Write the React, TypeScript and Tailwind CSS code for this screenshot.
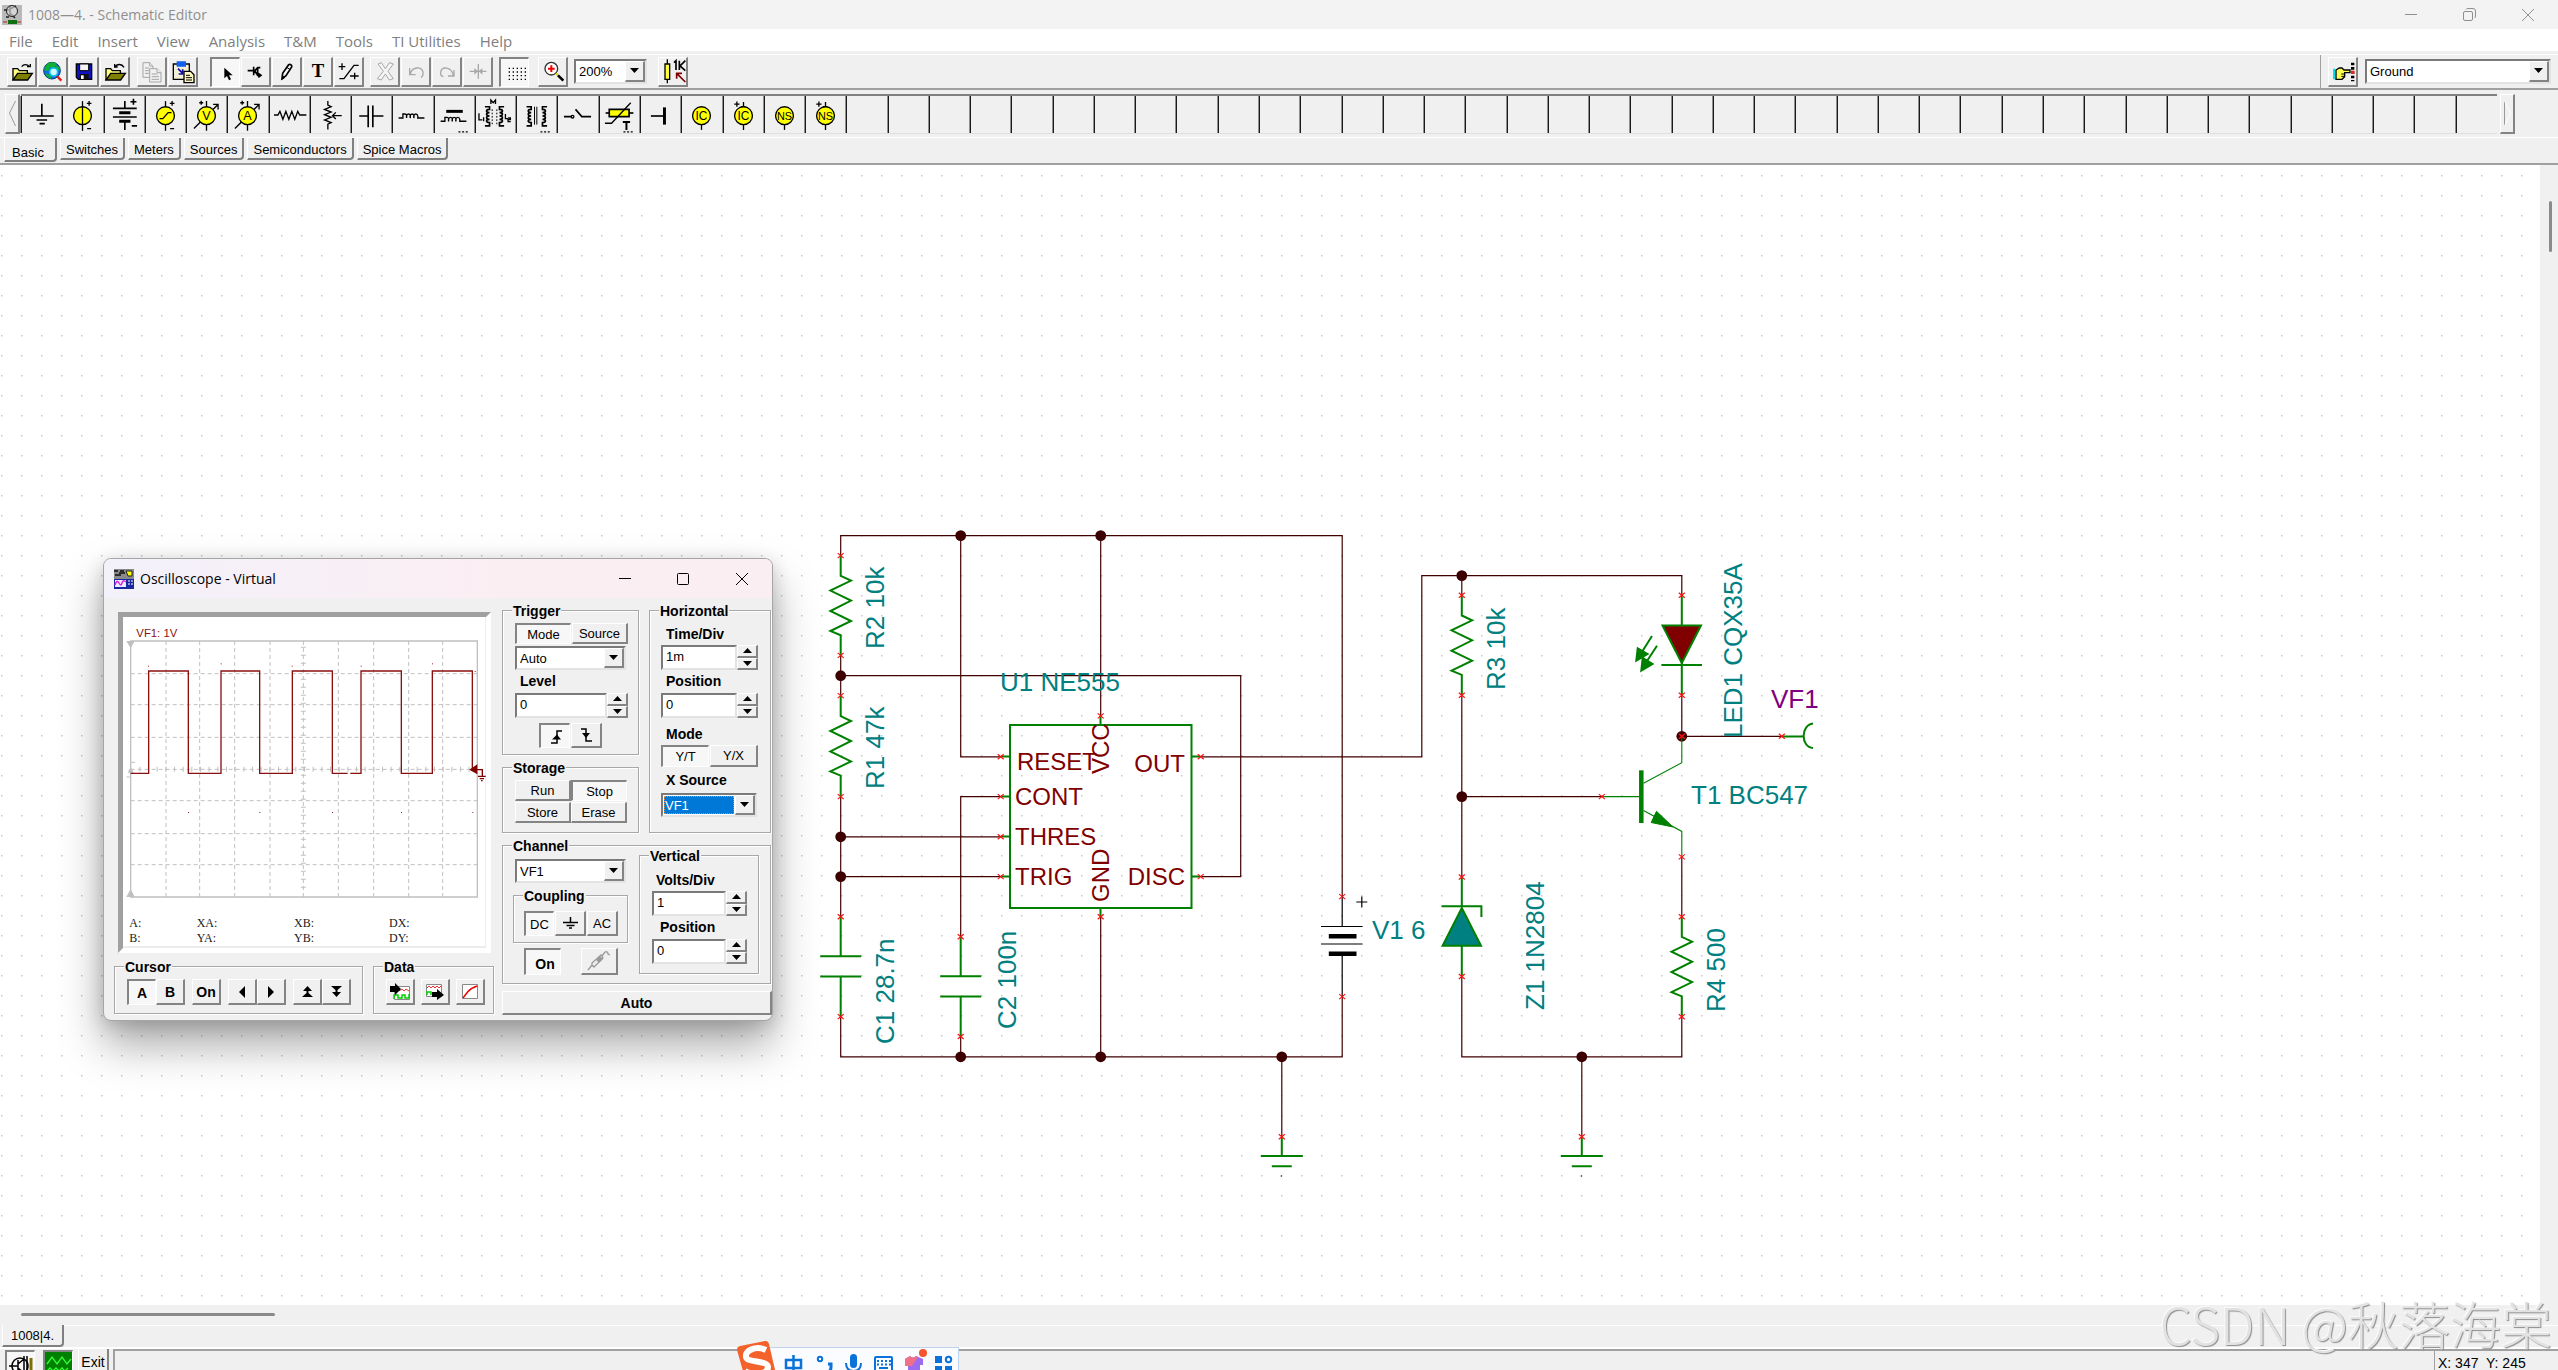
import type { ReactNode } from 'react';
import clsx from 'clsx';

const RAISED =
  'border-t border-l border-r-2 border-b-2 border-t-white border-l-white border-r-[#848484] border-b-[#848484] bg-[#f0f0f0]';
const PRESSED =
  'border-t-2 border-l-2 border-r border-b border-t-[#848484] border-l-[#848484] border-r-white border-b-white bg-[#f7f7f7]';
const SUNKEN =
  'border-t-2 border-l-2 border-r-2 border-b-2 border-t-[#7a7a7a] border-l-[#7a7a7a] border-r-[#e3e3e3] border-b-[#e3e3e3] bg-white';

interface BevelButtonProps {
  label: string;
  pressed?: boolean;
  className?: string;
  children: ReactNode;
}

function BevelButton({ label, pressed, className, children }: BevelButtonProps) {
  return (
    <button
      type="button"
      aria-label={label}
      aria-pressed={pressed}
      className={clsx('flex shrink-0 items-center justify-center leading-none', pressed ? PRESSED : RAISED, className)}
    >
      {children}
    </button>
  );
}

interface ComboProps {
  id: string;
  label: string;
  value: string;
  className?: string;
  selected?: boolean;
}

function Combo({ id, label, value, className, selected }: ComboProps) {
  return (
    <div className={clsx('relative flex', SUNKEN, className)}>
      <select
        id={id}
        aria-label={label}
        defaultValue={value}
        className={clsx(
          'min-w-0 flex-1 appearance-none text-[13px] leading-none outline-none',
          selected ? 'm-px mr-[21px] border border-dotted border-[#e08a3c] bg-[#0078d7] text-white' : 'bg-white pl-[3px] text-black'
        )}
      >
        <option>{value}</option>
      </select>
      <span className={clsx('pointer-events-none absolute inset-y-0 right-0 flex w-5 items-center justify-center', RAISED)}>
        <svg width="9" height="6" viewBox="0 0 9 6">
          <path d="M0 0h9L4.500 5z" />
        </svg>
      </span>
    </div>
  );
}

function Spin({ id, label, value, className }: ComboProps) {
  return (
    <div className={clsx('flex h-[25px]', className)}>
      <input
        id={id}
        aria-label={label}
        defaultValue={value}
        className={clsx('min-w-0 flex-1 pl-[3px] pb-0.5 text-[13px] leading-none outline-none', SUNKEN)}
      />
      <div className="flex w-[21px] flex-col">
        <BevelButton label={`${label} up`} className="flex-1">
          <svg width="9" height="5" viewBox="0 0 9 5">
            <path d="M0 5h9L4.500 0z" />
          </svg>
        </BevelButton>
        <BevelButton label={`${label} down`} className="flex-1">
          <svg width="9" height="5" viewBox="0 0 9 5">
            <path d="M0 0h9L4.500 5z" />
          </svg>
        </BevelButton>
      </div>
    </div>
  );
}

function Group({ title, className, children }: { title: string; className?: string; children: ReactNode }) {
  return (
    <fieldset className={clsx('relative min-w-0 border border-[#a8a8a8] shadow-[1px_1px_0_#fff,inset_1px_1px_0_#fff]', className)}>
      <legend className="absolute -top-2 left-[9px] bg-[#f0f0f0] px-px text-[14px] leading-4 font-bold">{title}</legend>
      {children}
    </fieldset>
  );
}

/* ---------- main toolbar icons, drawn on a 90x90 grid ---------- */

function ToolIcon({ children }: { children: ReactNode }) {
  return (
    <svg className="h-[30px] w-[30px] shrink-0" viewBox="0 0 90 90" fill="none" stroke="#000" strokeWidth="4">
      {children}
    </svg>
  );
}

const folder = (
  <>
    <path d="M18 72V38h14l5 6h24v8" fill="#ffff80" strokeWidth="4" />
    <path d="M18 72l14-20h44L62 72z" fill="#808000" strokeWidth="4" />
  </>
);

const openIcon = (
  <>
    {folder}
    <path d="M44 32c6-8 16-8 24 0M60 32h10V24" strokeWidth="4" />
  </>
);
const openBackIcon = (
  <>
    {folder}
    <path d="M44 24v9h9M45 32c8-9 20-9 27 2" strokeWidth="4" />
  </>
);
const globeIcon = (
  <>
    <circle cx="42" cy="44" r="25" fill="#1668e8" stroke="#003a80" strokeWidth="3" />
    <path d="M24 28c8-10 24-12 32-4l-8 12-12-2-6 12-12-4z" fill="#10b030" stroke="none" />
    <path d="M22 52l14 4 4 12c-8 0-16-6-18-16zM52 26l12 8 2 10-10-4z" fill="#10b030" stroke="none" />
    <circle cx="47" cy="48" r="12" fill="#d8f6ff" stroke="#00c8e0" strokeWidth="5" />
    <path d="M57 60l13 14" stroke="#e81818" strokeWidth="7" />
  </>
);
const saveIcon = (
  <>
    <path d="M22 24h46v46H28l-6-6z" fill="#1010c0" />
    <path d="M32 24h27v20H32z" fill="#f4f4f4" strokeWidth="3" />
    <path d="M32 54h27v16H32z" fill="#101010" stroke="none" />
    <path d="M36 58h8v11h-8z" fill="#fff" stroke="none" />
  </>
);
const copyIcon = (
  <g stroke="#a5a5a5" strokeWidth="3" fill="#f0f0f0">
    <path d="M18 20h20l10 10v34H18z" />
    <path d="M38 20v10h10M24 36h12M24 44h12M24 52h12" />
    <path d="M38 38h22l12 12v28H38z" />
    <path d="M60 38v12h12M44 54h18M44 62h22M44 70h22" />
  </g>
);
const pasteIcon = (
  <>
    <path d="M16 24h48v46H16z" fill="#f4f0d8" />
    <path d="M28 18h24v12H28z" fill="#1060f0" stroke="#1060f0" />
    <path d="M30 38l14 14M44 40v14H32" stroke="#1010a0" strokeWidth="5" />
    <path d="M48 46h20l10 10v24H48z" fill="#fff8c0" />
    <path d="M54 58h12M54 65h18M54 72h18" strokeWidth="3" />
  </>
);
const cursorIcon = <path d="M40 32v32l8-7 6 13 6-3-6-12h11z" fill="#000" stroke="none" />;
const wireIcon = <path d="M20 44h18M38 32v26M38 44h4l8-9h8M42 46l8 12h8M50 35v23M52 52l8 6-8 6" strokeWidth="5" />;
const penIcon = (
  <>
    <path d="M30 68l2-16 18-26c4-3 11 1 9 7L42 59z" fill="#f8f8f8" strokeWidth="5" />
    <path d="M44 34l11 7M30 70l3-9 5 4z" strokeWidth="3" />
  </>
);
const textIcon = (
  <text x="45" y="64" textAnchor="middle" fill="#000" stroke="none" className="font-['Liberation_Serif',serif] text-[56px] font-bold">
    T
  </text>
);
const signIcon = <path d="M14 32h20M24 22v20M16 68h14L60 28h14M48 60h26M62 50v20" strokeWidth="4" />;
const deleteIcon = (
  <path
    d="M24 24l10-4 12 18 12-18 12 4-16 22 16 22-12 4-12-18-12 18-12-4 18-22z"
    stroke="#a8a8a8"
    strokeWidth="3"
    fill="#f4f4f4"
  />
);
const undoIcon = <path d="M26 36v20h18M28 54c4-20 32-26 38-6 1 8-2 14-6 16" stroke="#a8a8a8" strokeWidth="4" />;
const redoIcon = <path d="M66 42v18H48M64 58C58 32 30 30 26 48c-1 8 3 13 8 14" stroke="#a8a8a8" strokeWidth="4" />;
const mirrorIcon = (
  <>
    <path d="M20 46h50M46 24v44" stroke="#a8a8a8" strokeWidth="4" />
    <path d="M34 36l11 10-11 10zM58 36L47 46l11 10z" fill="#a8a8a8" stroke="none" />
  </>
);
const gridIcon = <path d="M26 34h54M26 45h54M26 56h54M26 67h54" strokeWidth="4" strokeDasharray="4 8" />;
const zoomIcon = (
  <>
    <circle cx="40" cy="38" r="19" fill="#fff" stroke="#303030" strokeWidth="4" />
    <path d="M30 38h20M40 28v20" stroke="#f00000" strokeWidth="6" />
    <path d="M54 52l6 6" stroke="#e0d000" strokeWidth="6" />
    <path d="M60 58l16 16" strokeWidth="8" />
  </>
);
const valueIcon = (
  <>
    <path d="M28 10v72" strokeWidth="4" />
    <path d="M21 24h14v46H21z" fill="#ffff40" strokeWidth="4" />
    <path d="M48 20l6-6v28M64 14v28M82 14L66 30l16 14" strokeWidth="5" />
    <path d="M54 52h18M56 50v18M56 52l26 26" stroke="#800000" strokeWidth="5" />
  </>
);
const handIcon = (
  <>
    <path d="M18 38v32" stroke="#00e0f0" strokeWidth="6" />
    <path d="M24 42l10-6h8l6 6h18v8H50v12l-8 8H24z" fill="#ffff50" strokeWidth="4" />
    <path d="M40 54h10M40 61h8" strokeWidth="3" />
    <path d="M74 20v56" strokeWidth="10" strokeDasharray="8 5" />
    <path d="M74 44v10" stroke="#f02020" strokeWidth="10" />
  </>
);

interface Tool {
  label: string;
  icon: ReactNode;
  pressed?: boolean;
}

const FILE_TOOLS: Tool[] = [
  { label: 'Open', icon: openIcon },
  { label: 'Open from the Web', icon: globeIcon },
  { label: 'Save', icon: saveIcon },
  { label: 'Close', icon: openBackIcon },
];
const CLIP_TOOLS: Tool[] = [
  { label: 'Copy', icon: copyIcon },
  { label: 'Paste', icon: pasteIcon },
];
const DRAW_TOOLS: Tool[] = [
  { label: 'Select', icon: cursorIcon, pressed: true },
  { label: 'Last component', icon: wireIcon },
  { label: 'Wire', icon: penIcon },
  { label: 'Text', icon: textIcon },
  { label: 'Hide/Reconnect', icon: signIcon },
];
const EDIT_TOOLS: Tool[] = [
  { label: 'Delete', icon: deleteIcon },
  { label: 'Rotate left', icon: undoIcon },
  { label: 'Rotate right', icon: redoIcon },
  { label: 'Mirror', icon: mirrorIcon },
];

function ToolGroup({ tools }: { tools: Tool[] }) {
  return (
    <div className="flex gap-px">
      {tools.map((tool) => (
        <BevelButton key={tool.label} label={tool.label} pressed={tool.pressed} className="h-[30px] w-[30px]">
          <ToolIcon>{tool.icon}</ToolIcon>
        </BevelButton>
      ))}
    </div>
  );
}

/* ---------- component palette, drawn on a 124x114 grid ---------- */

const disc = <circle cx="62" cy="59" r="27" fill="#ffff00" />;
const plusMinus = (
  <>
    <path d="M75 22h14M82 15v14M76 98h12" />
  </>
);
const coilLeft = 'M38 32h14v8c-12 0-12 10 0 10-12 0-12 10 0 10-12 0-12 10 0 10-12 0-12 10 0 10v10H38';
const coilRight = 'M94 32H80v8c12 0 12 10 0 10 12 0 12 10 0 10 12 0 12 10 0 10 12 0 12 10 0 10v10h14';

function discText(text: string, size: string) {
  return (
    <text x="62" y="72" textAnchor="middle" fill="#000" stroke="none" className={clsx("font-['Liberation_Sans',sans-serif]", size)}>
      {text}
    </text>
  );
}

const meter = (text: string) => (
  <>
    <path d="M62 15v90M24 98l72-72M82 25h15v15" />
    <circle cx="62" cy="59" r="27" fill="#ffff00" />
    {discText(text, 'text-[38px]')}
    <path d="M40 20h12M46 14v12" />
  </>
);

const PALETTE: { label: string; icon: ReactNode }[] = [
  { label: 'Ground', icon: <path d="M63 23v37M27 60h72M47 72h32M56 83h16" strokeWidth="5" /> },
  { label: 'Current source', icon: <>{disc}<path d="M62 15v90" />{plusMinus}</> },
  {
    label: 'Battery',
    icon: (
      <>
        <path d="M63 15v22M27 37h72M27 63h72M63 76v26M80 17h18M89 8v18M84 90h16" strokeWidth="5" />
        <path d="M46 50h34M46 76h34" strokeWidth="9" />
      </>
    ),
  },
  { label: 'Generator', icon: <><path d="M62 15v90" />{disc}<path d="M44 68h10l16-18h10" />{plusMinus}</> },
  { label: 'Voltage generator', icon: meter('V') },
  { label: 'Current generator', icon: meter('A') },
  { label: 'Resistor', icon: <path d="M15 57h12l6-11 9 24 9-24 9 24 9-24 9 24 9-24 6 11h20" /> },
  { label: 'Potentiometer', icon: <path d="M54 15v12l10 5-20 8 20 8-20 8 20 8-20 8 20 8-10 5v16M96 59H68M78 49L68 59l10 10" /> },
  { label: 'Capacitor', icon: <path d="M25 60h27M52 28v66M66 28v66M66 60h32" strokeWidth="5" /> },
  { label: 'Inductor', icon: <path d="M20 66h13V54h7c6 0 4 12 4 12s-2-12 6-12 5 12 5 12-2-12 6-12 5 12 5 12-2-12 6-12 6 12 6 12h20" /> },
  {
    label: 'Coil with core',
    icon: (
      <>
        <path d="M37 46h50" strokeWidth="9" />
        <path d="M20 76h13V64h7c6 0 4 12 4 12s-2-12 6-12 5 12 5 12-2-12 6-12 5 12 5 12-2-12 6-12 6 12 6 12h20" />
        <path d="M74 108h30" strokeDasharray="6 5" />
      </>
    ),
  },
  {
    label: 'Coupled inductors',
    icon: (
      <>
        <path d={coilLeft} transform="translate(-8 0)" strokeWidth="5" />
        <path d={coilRight} transform="translate(-6 0)" strokeWidth="5" />
        <path d="M12 52v20h10M26 64v12M92 54v14h8M100 66h7v5h-7v6h8M48 24V12l7 8 7-8v12" />
        <path d="M52 40v46M66 40v46" strokeWidth="3" strokeDasharray="5 5" />
      </>
    ),
  },
  {
    label: 'Transformer',
    icon: (
      <>
        <path d={coilLeft} transform="translate(-6 0)" strokeWidth="5" />
        <path d={coilRight} strokeWidth="5" />
        <path d="M56 32v54M63 32v54" strokeWidth="3" />
        <path d="M74 108h30" strokeDasharray="6 5" />
      </>
    ),
  },
  { label: 'Switch', icon: <><path d="M21 62h22M56 40l19 22h28" strokeWidth="5" /><circle cx="47" cy="62" r="4" /></> },
  {
    label: 'Thermistor',
    icon: (
      <>
        <path d="M20 51h84" strokeWidth="5" />
        <path d="M31 40h60v22H31z" fill="#ffff00" strokeWidth="5" />
        <path d="M96 20L38 82H18" />
        <path d="M72 78h22M83 78v24" strokeWidth="6" />
        <path d="M74 108h30" strokeDasharray="6 5" />
      </>
    ),
  },
  { label: 'Open end', icon: <><path d="M33 60h40" strokeWidth="5" /><path d="M74 34v52" strokeWidth="9" /></> },
  { label: 'Initial condition', icon: <><path d="M62 84v18" />{disc}{discText('IC', 'text-[36px]')}</> },
  { label: 'Initial condition 2', icon: <><path d="M62 84v18M62 18v16M34 24h16M42 16v16M54 32h14" />{disc}{discText('IC', 'text-[36px]')}</> },
  { label: 'Nodeset', icon: <><path d="M62 84v18" />{disc}{discText('NS', 'text-[33px]')}</> },
  { label: 'Nodeset 2', icon: <><path d="M62 84v18M62 18v16M34 24h16M42 16v16M54 32h14" />{disc}{discText('NS', 'text-[33px]')}</> },
];

const PALETTE_SLOTS = 60;

const MENU = ['File', 'Edit', 'Insert', 'View', 'Analysis', 'T&M', 'Tools', 'TI Utilities', 'Help'];
const TABS = ['Basic', 'Switches', 'Meters', 'Sources', 'Semiconductors', 'Spice Macros'];

function TitleBar() {
  return (
    <header className="flex h-[29px] shrink-0 items-center bg-[#f3f3f3] pl-0.5 text-[#8f8f8f]">
      <svg className="h-5 w-5" viewBox="0 0 20 20">
        <path d="M0 0h20v20H0z" fill="#b9b9b9" />
        <path d="M2 5h6M8 1v10M8 4l6-3M8 8l5 5M4 12h3" stroke="#222" strokeWidth="1.600" fill="none" />
        <circle cx="10" cy="6" r="5.500" fill="#e8e8e8" fillOpacity=".6" stroke="#222" />
        <path d="M6 15h9v4H6z" fill="#107010" />
        <path d="M1 17h4M15 17h4" stroke="#c02020" />
      </svg>
      <h1 className="ml-1.5 text-[14px] leading-5">1008—4. - Schematic Editor</h1>
      <div className="ml-auto flex">
        <button type="button" aria-label="Minimize" className="flex h-[29px] w-[58px] items-center justify-center">
          <svg width="12" height="12" stroke="#8f8f8f">
            <path d="M0 5.500h12" />
          </svg>
        </button>
        <button type="button" aria-label="Restore" className="flex h-[29px] w-[58px] items-center justify-center">
          <svg width="13" height="13" fill="none" stroke="#8f8f8f">
            <rect x=".5" y="3.500" width="9" height="9" rx="1.500" />
            <path d="M3 1.500q.5-1 2-1h5q2.500 0 2.500 2.500v5q0 1.500-1 2" />
          </svg>
        </button>
        <button type="button" aria-label="Close" className="flex h-[29px] w-[60px] items-center justify-center">
          <svg width="12" height="12" stroke="#8f8f8f">
            <path d="M0 0l12 12M12 0L0 12" />
          </svg>
        </button>
      </div>
    </header>
  );
}

function Toolbar() {
  return (
    <div className="flex h-9 shrink-0 items-center border-t border-b-2 border-t-white border-b-[#a0a0a0] pl-[7px]">
      <ToolGroup tools={FILE_TOOLS} />
      <div className="ml-[7px] flex">
        <ToolGroup tools={CLIP_TOOLS} />
      </div>
      <div className="ml-3 flex">
        <ToolGroup tools={DRAW_TOOLS} />
      </div>
      <div className="ml-1.5 flex">
        <ToolGroup tools={EDIT_TOOLS} />
      </div>
      <div className="ml-1.5 flex">
        <ToolGroup tools={[{ label: 'Grid', icon: gridIcon, pressed: true }]} />
      </div>
      <div className="ml-[9px] flex">
        <ToolGroup tools={[{ label: 'Zoom', icon: zoomIcon }]} />
      </div>
      <Combo id="zoom" label="Zoom level" value="200%" className="ml-[6px] h-[25px] w-[73px]" />
      <div className="ml-[11px] flex">
        <ToolGroup tools={[{ label: 'Component value', icon: valueIcon }]} />
      </div>
      <div className="ml-auto flex h-full items-center border-l border-[#a0a0a0] pr-[7px] pl-[7px]">
        <ToolGroup tools={[{ label: 'Find component', icon: handIcon }]} />
        <Combo id="component" label="Component" value="Ground" className="ml-[7px] h-[25px] w-[186px]" />
      </div>
    </div>
  );
}

function Palette() {
  return (
    <div className="flex h-[48px] shrink-0 items-start border-b border-white pt-1 pr-[43px] pl-[5px]">
      <button type="button" aria-label="Scroll left" className={clsx('h-[40px] w-[15px]', RAISED)}>
        <svg width="12" height="37" fill="none" stroke="#9a9a9a">
          <path d="M9.500 6L3.500 18l6 13" />
        </svg>
      </button>
      <div className="ml-px flex h-[40px] flex-1 border-t-2 border-b border-t-[#808080] border-b-[#e0e0e0]">
        {Array.from({ length: PALETTE_SLOTS }, (_, i) => {
          const part = PALETTE[i];
          return (
            <button
              key={i}
              type="button"
              aria-label={part ? part.label : `Empty slot ${i + 1}`}
              className="min-w-0 flex-1 border-l border-[#1a1a1a] shadow-[-1px_0_0_#8f8f8f]"
            >
              {part && (
                <svg className="-ml-px h-[38px] w-[41px]" viewBox="0 0 124 114" fill="none" stroke="#000" strokeWidth="4">
                  {part.icon}
                </svg>
              )}
            </button>
          );
        })}
      </div>
      <button type="button" aria-label="Scroll right" className={clsx('ml-[3px] h-[40px] w-[15px]', RAISED)}>
        <svg width="12" height="37" fill="none">
          <path d="M3.500 6v25" stroke="#9a9a9a" />
          <path d="M3.500 6l6 12-6 13" stroke="#fff" />
        </svg>
      </button>
    </div>
  );
}

function Tabs() {
  return (
    <nav className="flex h-[27px] shrink-0 items-start gap-[3px] border-b-2 border-[#a0a0a0] pl-1 text-[13px]">
      {TABS.map((tab, i) => (
        <button
          key={tab}
          type="button"
          className={clsx(
            'rounded-br-sm border-r-2 border-b-2 border-l border-r-[#808080] border-b-[#808080] border-l-white pt-0.5 leading-none',
            i === 0 ? 'h-6 w-[53px] pt-1.5 pr-1' : 'h-[22px] px-[5px]'
          )}
        >
          {tab}
        </button>
      ))}
    </nav>
  );
}

/* ---------- schematic ---------- */

const WIRES = [
  'M840.700 555.600V535.600H1342.200V896.600',
  'M960.700 535.600V756.800H1000.700',
  'M1100.700 535.600V715.900',
  'M840.700 655.400V695.600',
  'M840.700 675.700H1240.700V876.600H1200.700',
  'M840.700 796.600V916.800',
  'M840.700 836.800H1000.700',
  'M840.700 876.600H1000.700',
  'M1000.700 796.600H960.700V936.700',
  'M840.700 1016.600V1056.800H1342.200V996.600',
  'M960.700 1036.500V1056.800',
  'M1100.700 916.800V1056.800',
  'M1281.800 1056.800V1136.800',
  'M1200.700 756.800H1421.800V575.600H1681.800V595.300',
  'M1461.800 575.600V595.300',
  'M1461.800 695.300V877',
  'M1461.800 796.600H1601.800',
  'M1461.800 976.500V1056.800H1681.800V1016.700',
  'M1581.800 1056.800V1136.800',
  'M1681.800 695.300V736.300H1781.800',
  'M1681.800 856.900V916.700',
];

const NODES = [
  [960.7, 535.6],
  [1100.7, 535.6],
  [840.7, 675.7],
  [840.7, 836.8],
  [840.7, 876.6],
  [960.7, 1056.8],
  [1100.7, 1056.8],
  [1281.8, 1056.8],
  [1461.8, 575.6],
  [1461.8, 796.6],
  [1681.8, 736.3],
  [1581.8, 1056.8],
];

const PINS = [
  [840.7, 555.6],
  [840.7, 655.4],
  [840.7, 695.6],
  [840.7, 796.6],
  [840.7, 916.8],
  [840.7, 1016.6],
  [960.7, 936.7],
  [960.7, 1036.5],
  [1000.7, 756.8],
  [1000.7, 796.6],
  [1000.7, 836.8],
  [1000.7, 876.6],
  [1200.7, 756.8],
  [1200.7, 876.6],
  [1100.7, 715.9],
  [1100.7, 916.8],
  [1342.2, 896.6],
  [1342.2, 996.6],
  [1461.8, 595.3],
  [1461.8, 695.3],
  [1461.8, 877],
  [1461.8, 976.5],
  [1601.8, 796.6],
  [1681.8, 595.3],
  [1681.8, 695.3],
  [1681.8, 736.3],
  [1781.8, 736.3],
  [1681.8, 856.9],
  [1681.8, 916.7],
  [1681.8, 1016.7],
  [1281.8, 1136.8],
  [1581.8, 1136.8],
];

const RESISTORS = [
  [840.7, 555.6],
  [840.7, 696],
  [1461.8, 595.3],
  [1681.8, 916.7],
];

const CAPACITORS = [
  [840.7, 916.8],
  [960.7, 936.7],
];

const GROUNDS = [1281.8, 1581.8];

const PART_LABELS = [
  { text: 'U1 NE555', x: 1000, y: 691 },
  { text: 'V1 6', x: 1372, y: 939 },
  { text: 'T1 BC547', x: 1691, y: 804 },
];

const UPRIGHT_LABELS = [
  { text: 'R2 10k', x: 884, y: 649 },
  { text: 'R1 47k', x: 884, y: 789 },
  { text: 'C1 28.7n', x: 894, y: 1044 },
  { text: 'C2 100n', x: 1016, y: 1029 },
  { text: 'R3 10k', x: 1505, y: 690 },
  { text: 'LED1 CQX35A', x: 1742, y: 738 },
  { text: 'Z1 1N2804', x: 1544, y: 1010 },
  { text: 'R4 500', x: 1725, y: 1012 },
];

function Schematic() {
  return (
    <svg className="h-full w-full font-['Liberation_Sans',Arial,sans-serif]" role="img" aria-label="NE555 schematic">
      <defs>
        <pattern id="dots" width="20" height="20" patternUnits="userSpaceOnUse">
          <rect x="1" y="10" width="1.500" height="1.500" fill="#c8c8c8" />
        </pattern>
      </defs>
      <rect width="100%" height="100%" fill="url(#dots)" />
      <g transform="translate(0 -165)">
        <g stroke="#400000" strokeWidth="1.200" fill="none">
          {WIRES.map((d) => (
            <path key={d} d={d} />
          ))}
        </g>
        {NODES.map(([x, y]) => (
          <circle key={`${x}-${y}`} cx={x} cy={y} r="5.400" fill="#3c0000" />
        ))}

        <g stroke="#008000" strokeWidth="2" fill="none">
          {RESISTORS.map(([x, y]) => (
            <path key={`${x}-${y}`} transform={`translate(${x} ${y})`} d="M0 0V20.200L10.300 25L-10.300 35L10.300 45L-10.300 55.400L10.300 65.400L-10.300 75.400L0 79.600V100" />
          ))}
          {CAPACITORS.map(([x, y]) => (
            <path key={`${x}-${y}`} transform={`translate(${x} ${y})`} d="M0 0V39.500M-20.500 39.500H20.500M-20.500 59.700H20.500M0 59.700V100" />
          ))}
          {GROUNDS.map((x) => (
            <path key={x} d={`M${x} 1137V1156M${x - 21} 1156H${x + 21}M${x - 10} 1166.300H${x + 10}M${x - 1} 1176h1`} />
          ))}
          <rect x="1010" y="725" width="181.500" height="183" />
          <path d="M1001 756.400h9M1001 796.400h9M1001 836.600h9M1001 876.400h9M1191 756.600h9M1191 876.600h9M1100.500 716v9M1100.500 908v9" />

          {/* LED1 */}
          <path d="M1681.800 595V665M1681.800 665V695M1661.400 665H1702" />
          <path d="M1662.500 625.500H1701L1681.800 663z" fill="#800000" />
          <path d="M1652 636L1640 655M1657 645.700L1645 664" />
          <path d="M1636 661L1637.500 648L1648 654zM1641 671L1642.500 657.500L1653 664z" fill="#008000" strokeWidth="1.500" />

          {/* T1 */}
          <path d="M1681.800 737V762.700L1643.500 783.200M1601.800 796.600H1639M1643.500 810.400L1681.800 831.400V857" strokeWidth="1.100" />
          <path d="M1641.300 770.300V823" strokeWidth="4.500" />
          <path d="M1656.500 811.300L1673 827L1651.200 822.500z" fill="#008000" strokeWidth="1" />

          {/* VF1 probe */}
          <path d="M1782 736.500H1804M1813 723.500C1800.500 725 1800.500 747 1813 748" />

          {/* Z1 */}
          <path d="M1461.800 877V906M1441.500 906.200H1481.400V917M1461.800 946V976.500" />
          <path d="M1461.800 908L1481 945.700H1442.600z" fill="#008080" />
        </g>

        {/* V1 */}
        <g stroke="#000" fill="none">
          <path d="M1342.200 897V926.500M1342.200 955V996M1321 926.500H1362.600M1321 944H1362.600M1356.300 902H1367.300M1361.800 896.500V907.500" strokeWidth="1.200" />
          <path d="M1328.800 936.300H1356.500M1328.800 953.800H1356.500" strokeWidth="4.500" />
        </g>

        <g stroke="#ff1010" strokeWidth="1.200">
          {PINS.map(([x, y]) => (
            <path key={`${x}-${y}`} d={`M${x - 3} ${y - 2.5}L${x + 3} ${y + 2.5}M${x + 3} ${y - 2.5}L${x - 3} ${y + 2.5}`} />
          ))}
        </g>

        <g fill="#800000" className="text-[24px]">
          <text x="1017" y="770">RESET</text>
          <text x="1015" y="805">CONT</text>
          <text x="1015" y="845">THRES</text>
          <text x="1015" y="885">TRIG</text>
          <text x="1185" y="772" textAnchor="end">OUT</text>
          <text x="1185" y="885" textAnchor="end">DISC</text>
          <text transform="translate(1109 774) rotate(-90)">VCC</text>
          <text transform="translate(1109 902) rotate(-90)">GND</text>
        </g>
        <g fill="#008080" className="text-[26px]">
          {PART_LABELS.map((l) => (
            <text key={l.text} x={l.x} y={l.y}>
              {l.text}
            </text>
          ))}
          {UPRIGHT_LABELS.map((l) => (
            <text key={l.text} transform={`translate(${l.x} ${l.y}) rotate(-90)`}>
              {l.text}
            </text>
          ))}
        </g>
        <text x="1771" y="708" fill="#800080" className="text-[26px]">
          VF1
        </text>
      </g>
    </svg>
  );
}

/* ---------- oscilloscope ---------- */

const V_LINES = [228, 329, 434, 540, 640, 745, 851, 956, 1058];
const H_LINES = [371, 464, 562, 658, 752, 851, 944];
const SPIKES = [
  [175, 348],
  [393, 341],
  [606, 348],
  [813, 348],
  [1027, 341],
  [1155, 364],
  [295, 787],
  [509, 787],
  [727, 787],
  [934, 787],
  [1148, 787],
];
const READOUTS = [
  { text: 'A:', x: 118, y: 1132 },
  { text: 'B:', x: 118, y: 1177 },
  { text: 'XA:', x: 320, y: 1132 },
  { text: 'YA:', x: 320, y: 1177 },
  { text: 'XB:', x: 612, y: 1132 },
  { text: 'YB:', x: 612, y: 1177 },
  { text: 'DX:', x: 897, y: 1132 },
  { text: 'DY:', x: 897, y: 1177 },
];

function ScopeScreen() {
  return (
    <div className="ml-1 h-[341px] w-[373px] border-5 border-t-[#a0a0a0] border-r-white border-b-white border-l-[#a0a0a0] bg-white">
      <svg className="h-full w-full" viewBox="99 201 1089 993" fill="none">
        <path d="M99 1191H1188M1188 201V1191" stroke="#e8e8e8" strokeWidth="4" />
        <g stroke="#c0c0c0" strokeWidth="3">
          <path d="M122 273H1162V1041H122z" strokeWidth="4" />
          {V_LINES.map((x) => (
            <path key={x} d={`M${x} 273V1041`} strokeDasharray="12 9" />
          ))}
          {H_LINES.map((y) => (
            <path key={y} d={`M122 ${y}H1162`} strokeDasharray="12 9" />
          ))}
          <path d="M640 290V1030" strokeWidth="15" strokeDasharray="3 21" />
          <path d="M148 658H1150" strokeWidth="15" strokeDasharray="3 23" />
          <path d="M122 637h13M110 681h13" />
        </g>
        <path d="M109 273h25l-12 22zM109 1041h25l-12-24zM113 668h18l-9-18z" fill="#c0c0c0" />
        <path
          d="M122 670H176V363H295V670H393V363H509V670H607V363H727V670H773M781 670H813V363H934V670H1027V363H1147V658"
          stroke="#8a1010"
          strokeWidth="4"
        />
        {SPIKES.map(([x, y]) => (
          <rect key={`${x}-${y}`} x={x - 1} y={y - 1} width="3" height="3" fill="#a02020" />
        ))}
        <path d="M1138 659l24-16v30z" fill="#800000" />
        <path d="M1160 659h17v20M1164 679h23M1169 686h13M1173 692h5" stroke="#800000" strokeWidth="4" />
        <text x="139" y="260" fill="#8a1010" className="font-['Liberation_Sans',sans-serif] text-[34px]">
          VF1: 1V
        </text>
        <g fill="#202020" className="font-['Liberation_Serif',serif] text-[36px]">
          {READOUTS.map((r) => (
            <text key={r.text} x={r.x} y={r.y}>
              {r.text}
            </text>
          ))}
        </g>
      </svg>
    </div>
  );
}

function Oscilloscope() {
  return (
    <section
      aria-label="Oscilloscope"
      className="absolute top-[393px] left-[103px] w-[670px] overflow-hidden rounded-lg border border-[#a6a6a6] bg-[#f0f0f0] shadow-[0_24px_44px_rgba(0,0,0,0.34),0_4px_18px_rgba(0,0,0,0.16)]"
    >
      <header className="flex h-[39px] items-center bg-linear-to-r from-[#f3f1fa] to-[#fbeef3] to-60% pl-[10px] font-['Open_Sans','Noto_Sans',sans-serif]">
        <svg className="h-5 w-5" viewBox="0 0 20 20">
          <path d="M0 0h20v10H0z" fill="#8a8a8a" />
          <path d="M0 2h4M6 2h4M1 6h6M5 4h6" stroke="#111" strokeWidth="1.500" />
          <path d="M12 2h6v5h-4z" fill="#ffff00" stroke="#222" />
          <path d="M0 10h20v10H0z" fill="#1828a0" />
          <path d="M1 11h11v7H1z" fill="#e8f0ff" />
          <path d="M1 16q2-6 4-2t3 0 4-1" stroke="#e020e0" strokeWidth="1.500" fill="none" />
          <path d="M14 12h2M17 12h2M14 15h2M17 15h2" stroke="#fff" />
        </svg>
        <h2 className="ml-1.5 text-[14px] leading-5">Oscilloscope - Virtual</h2>
        <div className="ml-auto flex">
          <button type="button" aria-label="Minimize oscilloscope" className="flex h-[39px] w-[58px] items-center justify-center">
            <svg width="12" height="12" stroke="#000">
              <path d="M0 5.500h12" />
            </svg>
          </button>
          <button type="button" aria-label="Maximize oscilloscope" className="flex h-[39px] w-[58px] items-center justify-center">
            <svg width="12" height="12" stroke="#000" fill="none">
              <rect x=".5" y=".5" width="11" height="11" rx="1" />
            </svg>
          </button>
          <button type="button" aria-label="Close oscilloscope" className="flex h-[39px] w-[60px] items-center justify-center">
            <svg width="12" height="12" stroke="#000">
              <path d="M0 0l12 12M12 0L0 12" />
            </svg>
          </button>
        </div>
      </header>

      <div className="flex gap-2 pt-3 pb-[5px] pl-[10px] text-[13px]">
        <div className="w-[380px] shrink-0 pt-0.5">
          <ScopeScreen />
          <div className="mt-[13px] flex gap-[10px]">
            <Group title="Cursor" className="flex h-12 w-[249px] items-center gap-[7px] pt-1 pl-3 text-[14px] font-bold">
              <div className="flex">
                <BevelButton label="Cursor A" pressed className="h-[26px] w-[29px]">A</BevelButton>
                <BevelButton label="Cursor B" className="h-[26px] w-[29px]">B</BevelButton>
              </div>
              <BevelButton label="Cursor on" className="h-[26px] w-[29px]">On</BevelButton>
              <div className="flex">
                <BevelButton label="Cursor left" className="h-[26px] w-[29px]">
                  <svg width="6" height="12"><path d="M6 0v12L0 6z" /></svg>
                </BevelButton>
                <BevelButton label="Cursor right" className="h-[26px] w-[29px]">
                  <svg width="6" height="12"><path d="M0 0v12l6-6z" /></svg>
                </BevelButton>
              </div>
              <div className="flex">
                <BevelButton label="Cursor up" className="h-[26px] w-[29px]">
                  <svg width="11" height="12"><path d="M5.500 0L10 5H6.500v2L11 11H0l4.500-4V5H1z" /></svg>
                </BevelButton>
                <BevelButton label="Cursor down" className="h-[26px] w-[29px]">
                  <svg width="11" height="12"><path d="M0 0h11L6.500 4v2H10L5.500 11 1 6h3.500V4z" /></svg>
                </BevelButton>
              </div>
            </Group>
            <Group title="Data" className="flex h-12 w-[121px] items-center gap-1.5 pt-1 pl-3">
              <BevelButton label="Import data" className="h-[26px] w-[29px]">
                <svg width="20" height="18" fill="none">
                  <path d="M4.500 3.500h15v13h-15z" fill="#fff" stroke="#888" />
                  <path d="M9 8l3-2 2 2 2-2 3 2" stroke="#f03030" />
                  <path d="M4 16v-4h4v3h4v-3h3v3h4v-4" stroke="#00d000" strokeWidth="1.500" />
                  <path d="M0 3h5V0l6 6-6 6V9H0z" fill="#000" />
                </svg>
              </BevelButton>
              <BevelButton label="Export data" className="h-[26px] w-[29px]">
                <svg width="20" height="18" fill="none">
                  <path d="M1.500 1.500h15v12h-15z" fill="#fff" stroke="#888" />
                  <path d="M2 5l2-2 2 2 2-2 2 2 2-2 2 2 2-2" stroke="#f03030" />
                  <path d="M2 12V9h4v3" stroke="#00d000" strokeWidth="1.500" />
                  <path d="M7 9h5V6l7 6-7 5v-3H7z" fill="#000" />
                </svg>
              </BevelButton>
              <BevelButton label="Fit curve" className="h-[26px] w-[29px]">
                <svg width="18" height="16" fill="none">
                  <path d="M1.500.5h15v14h-15z" fill="#fff" stroke="#888" />
                  <path d="M2 14L7 7.500Q10 4 16 2" stroke="#f00000" strokeWidth="1.500" />
                </svg>
              </BevelButton>
            </Group>
          </div>
        </div>

        <div className="w-[270px] shrink-0">
          <div className="flex items-start gap-[10px]">
            <div className="w-[137px] space-y-3">
              <Group title="Trigger" className="flex h-[145px] flex-col pt-3 pr-[10px] pl-3">
                <div className="flex gap-px">
                  <BevelButton label="Trigger mode" pressed className="h-[21px] w-14">Mode</BevelButton>
                  <BevelButton label="Trigger source" className="h-[21px] w-14">Source</BevelButton>
                </div>
                <Combo id="trigger-mode" label="Trigger mode value" value="Auto" className="mt-0.5 h-6 w-[111px]" />
                <label htmlFor="trigger-level" className="pl-[5px] text-[14px] leading-[23px] font-bold">
                  Level
                </label>
                <Spin id="trigger-level" label="Level" value="0" />
                <div className="mt-[5px] ml-6 flex gap-px">
                  <BevelButton label="Rising edge" pressed className="h-[25px] w-[31px]">
                    <svg className="mt-0.5 ml-0.5" width="13" height="14" fill="none" stroke="#000" strokeWidth="1.500">
                      <path d="M1 13h6V1h5" />
                      <path d="M2 9.500l5-5 4 5z" fill="#000" stroke="none" />
                    </svg>
                  </BevelButton>
                  <BevelButton label="Falling edge" className="h-[25px] w-[31px]">
                    <svg width="13" height="14" fill="none" stroke="#000" strokeWidth="1.500">
                      <path d="M1 1h5v12h6" />
                      <path d="M2 5h8l-4 5z" fill="#000" stroke="none" />
                    </svg>
                  </BevelButton>
                </div>
              </Group>
              <Group title="Storage" className="grid h-[66px] grid-cols-2 content-start gap-y-px pt-3 pr-[11px] pl-3">
                <BevelButton label="Run" className="h-[21px]">Run</BevelButton>
                <BevelButton label="Stop" pressed className="h-[21px]">Stop</BevelButton>
                <BevelButton label="Store" className="h-[21px]">Store</BevelButton>
                <BevelButton label="Erase" className="h-[21px]">Erase</BevelButton>
              </Group>
            </div>

            <Group title="Horizontal" className="flex h-[223px] w-[122px] flex-col pt-3 pr-3 pl-[11px]">
              <label htmlFor="time-div" className="pl-[5px] text-[14px] leading-[22px] font-bold">
                Time/Div
              </label>
              <Spin id="time-div" label="Time/Div" value="1m" />
              <label htmlFor="h-position" className="pl-[5px] text-[14px] leading-[23px] font-bold">
                Position
              </label>
              <Spin id="h-position" label="Horizontal position" value="0" />
              <span className="mt-[5px] pl-[5px] text-[14px] leading-[22px] font-bold">Mode</span>
              <div className="flex gap-px">
                <BevelButton label="Y/T" pressed className="h-[22px] w-12">Y/T</BevelButton>
                <BevelButton label="Y/X" className="h-[22px] w-12">Y/X</BevelButton>
              </div>
              <label htmlFor="x-source" className="pl-[5px] text-[14px] leading-[26px] font-bold">
                X Source
              </label>
              <Combo id="x-source" label="X Source" value="VF1" selected className="h-6 w-[96px]" />
            </Group>
          </div>

          <Group title="Channel" className="mt-3 flex h-[139px] w-[269px] gap-[11px] pt-[9px] pl-[10px]">
            <div className="w-[115px] pt-1">
              <Combo id="channel" label="Channel" value="VF1" className="ml-0.5 h-6 w-[111px]" />
              <Group title="Coupling" className="mt-3 flex h-12 w-[115px] gap-px pt-[15px] pl-[10px]">
                <BevelButton label="DC" pressed className="h-[25px] w-[30px]">DC</BevelButton>
                <BevelButton label="Ground coupling" className="h-[25px] w-[31px]">
                  <svg width="15" height="12" fill="none" stroke="#000" strokeWidth="1.500">
                    <path d="M7.500 0v5M0 5.500h15M3.500 8.500h8M6 11h3" />
                  </svg>
                </BevelButton>
                <BevelButton label="AC" className="h-[25px] w-[31px]">AC</BevelButton>
              </Group>
              <div className="mt-[5px] flex justify-between pr-[10px] pl-[11px]">
                <BevelButton label="Channel on" pressed className="h-[27px] w-[37px] pt-1 pl-1 text-[14px] font-bold">
                  On
                </BevelButton>
                <BevelButton label="Probe" className="h-[27px] w-[37px]">
                  <svg width="24" height="20" fill="none" stroke="#999" strokeWidth="1.300">
                    <path d="M1 19l4-5M5 14l2 2 9-9-2-3-9 8zM15 5l3-4q3-1 3 2l2 1" />
                    <path d="M10 9l3-3 2 2-3 3z" fill="#999" />
                  </svg>
                </BevelButton>
              </div>
            </div>
            <Group title="Vertical" className="flex h-[119px] w-[120px] flex-col pt-[13px] pr-[11px] pl-3">
              <label htmlFor="volts-div" className="pl-1 text-[14px] leading-[22px] font-bold">
                Volts/Div
              </label>
              <Spin id="volts-div" label="Volts/Div" value="1" />
              <label htmlFor="v-position" className="pl-2 text-[14px] leading-[23px] font-bold">
                Position
              </label>
              <Spin id="v-position" label="Vertical position" value="0" />
            </Group>
          </Group>
          <BevelButton label="Auto" className="mt-[7px] h-6 w-full text-[14px] font-bold">
            Auto
          </BevelButton>
        </div>
      </div>
    </section>
  );
}

/* ---------- bottom of the window ---------- */

function ImeBar() {
  return (
    <div className="absolute top-[-8px] left-[737px] flex h-10 items-start">
      <svg className="relative z-10" width="40" height="40" viewBox="0 0 40 40">
        <path d="M0 9Q-.5 6 3 5L28 0Q31-.5 32 3l7 30-30 8z" fill="#f4622c" />
        <path d="M29 9C18 4 8 10 9 16s22 3 22 10-14 9-23 4" fill="none" stroke="#fff" strokeWidth="6" />
      </svg>
      <div className="mt-1.5 -ml-6 flex h-9 w-[206px] items-start border border-[#bfd3ee] bg-[#fafcff] pt-[7px] pl-[30px] text-[#0a72d8]">
        <svg className="overflow-visible" width="174" height="24" viewBox="0 0 174 24" fill="none" stroke="#0a72d8" strokeWidth="2">
          <path d="M2 5h15v8H2zM9.500 0v22" strokeWidth="2.500" />
          <circle cx="36" cy="4" r="2.200" />
          <path d="M44 9h3v3q0 4-3 5" strokeWidth="3" />
          <rect x="66" y="-1" width="7" height="14" rx="3.500" fill="#0a72d8" stroke="none" />
          <path d="M62 8q0 8 7.500 8T77 8" />
          <rect x="91" y="2" width="17" height="14" rx="1" />
          <path d="M93 6h14M93 9.500h14" strokeDasharray="2 2" />
          <path d="M95 13h9" />
          <path d="M121 4l5-3q3 3 6 0l7 3v6h-3v12h-12V10h-3z" fill="#9b6bf0" stroke="none" />
          <path d="M121 4l5-3q3 3 6 0l2 1-6 9h-7z" fill="#f07088" stroke="none" />
          <circle cx="139" cy="-2" r="4" fill="#f4552c" stroke="none" />
          <path d="M151 1h7v7h-7zM151 11h7v9h-7zM161 11h7v9h-7z" fill="#0a72d8" stroke="none" />
          <circle cx="164.500" cy="4.500" r="2.700" />
        </svg>
      </div>
    </div>
  );
}

function StatusBar() {
  return (
    <footer className="relative flex h-[21px] shrink-0 items-start text-[14px]">
      <div className="flex h-6 gap-2 pt-px pl-[5px]">
        <button type="button" aria-label="Schematic view" className={clsx('h-[30px] w-[30px]', PRESSED)}>
          <svg width="27" height="27" viewBox="0 0 27 27" fill="none" stroke="#000" strokeWidth="1.500">
            <circle cx="13" cy="14" r="8" />
            <path d="M2 14h9M11 8v12M11 12l6-5M11 16l6 5M17 4v20M20 4v20" />
            <path d="M24 6v14" stroke="#807000" strokeWidth="3" />
          </svg>
        </button>
        <button type="button" aria-label="Oscilloscope view" className={clsx('h-[30px] w-[30px]', PRESSED)}>
          <svg width="27" height="27" viewBox="0 0 27 27" fill="none">
            <path d="M0 0h27v27H0z" fill="#008000" />
            <path d="M2 12l5-7 5 7 5-7 5 7 4-5M2 19l3-3 3 3 3-3 3 3 3-3 3 3 3-3" stroke="#30ff30" strokeWidth="1.300" />
          </svg>
        </button>
      </div>
      <button type="button" className="ml-[5px] h-[21px] w-[31px] border-r-2 border-l border-r-[#848484] border-l-white pt-1 leading-none">
        Exit
      </button>
      <div className="ml-1 h-full flex-1 border-t-2 border-l-2 border-[#a0a0a0]" />
      <output className="h-full w-[124px] border-t-2 border-l border-[#a0a0a0] pt-1 pl-[3px] leading-[16px] whitespace-pre">
        X: 347  Y: 245
      </output>
      <ImeBar />
    </footer>
  );
}

export default function App() {
  return (
    <div className="relative flex h-screen flex-col overflow-hidden bg-[#f0f0f0] font-['Liberation_Sans',Arial,sans-serif] text-black">
      <div className="font-['Open_Sans','Noto_Sans',sans-serif]">
        <TitleBar />
        <nav className="flex h-[22px] gap-px bg-white text-[15px] leading-[24px] text-[#808080]">
          {MENU.map((item) => (
            <button key={item} type="button" className="px-[9px]">
              {item}
            </button>
          ))}
        </nav>
      </div>
      <div className="h-[3px] shrink-0" />
      <Toolbar />
      <Palette />
      <Tabs />

      <main className="relative flex min-h-0 flex-1">
        <div className="min-w-0 flex-1 bg-white">
          <Schematic />
        </div>
        <div className="w-[18px] pt-9 pl-[9px]">
          <div className="h-[51px] w-[3px] rounded-full bg-[#8a8a8a]" />
        </div>
        <Oscilloscope />
      </main>

      <div className="h-5 shrink-0 pt-2 pl-[21px]">
        <div className="h-[3px] w-[254px] rounded-full bg-[#8a8a8a]" />
      </div>
      <div className="flex h-6 shrink-0 items-start border-b-2 border-white pl-0.5 text-[13px]">
        <button
          type="button"
          className="h-[22px] w-[62px] rounded-br-sm border-r-2 border-b-2 border-l border-r-[#808080] border-b-[#808080] border-l-white pt-px"
        >
          1008|4.
        </button>
        <div className="h-px flex-1 bg-white" />
      </div>
      <StatusBar />

      <div className="pointer-events-none absolute right-[6px] bottom-[22px] font-['Noto_Sans_CJK_SC',sans-serif] text-[51px] leading-[50px] font-light text-[#e2e2e2] [text-shadow:1px_1px_1px_#8c8c8c,-1px_-1px_0_#fafafa]">
        CSDN @秋落海棠
      </div>
    </div>
  );
}
